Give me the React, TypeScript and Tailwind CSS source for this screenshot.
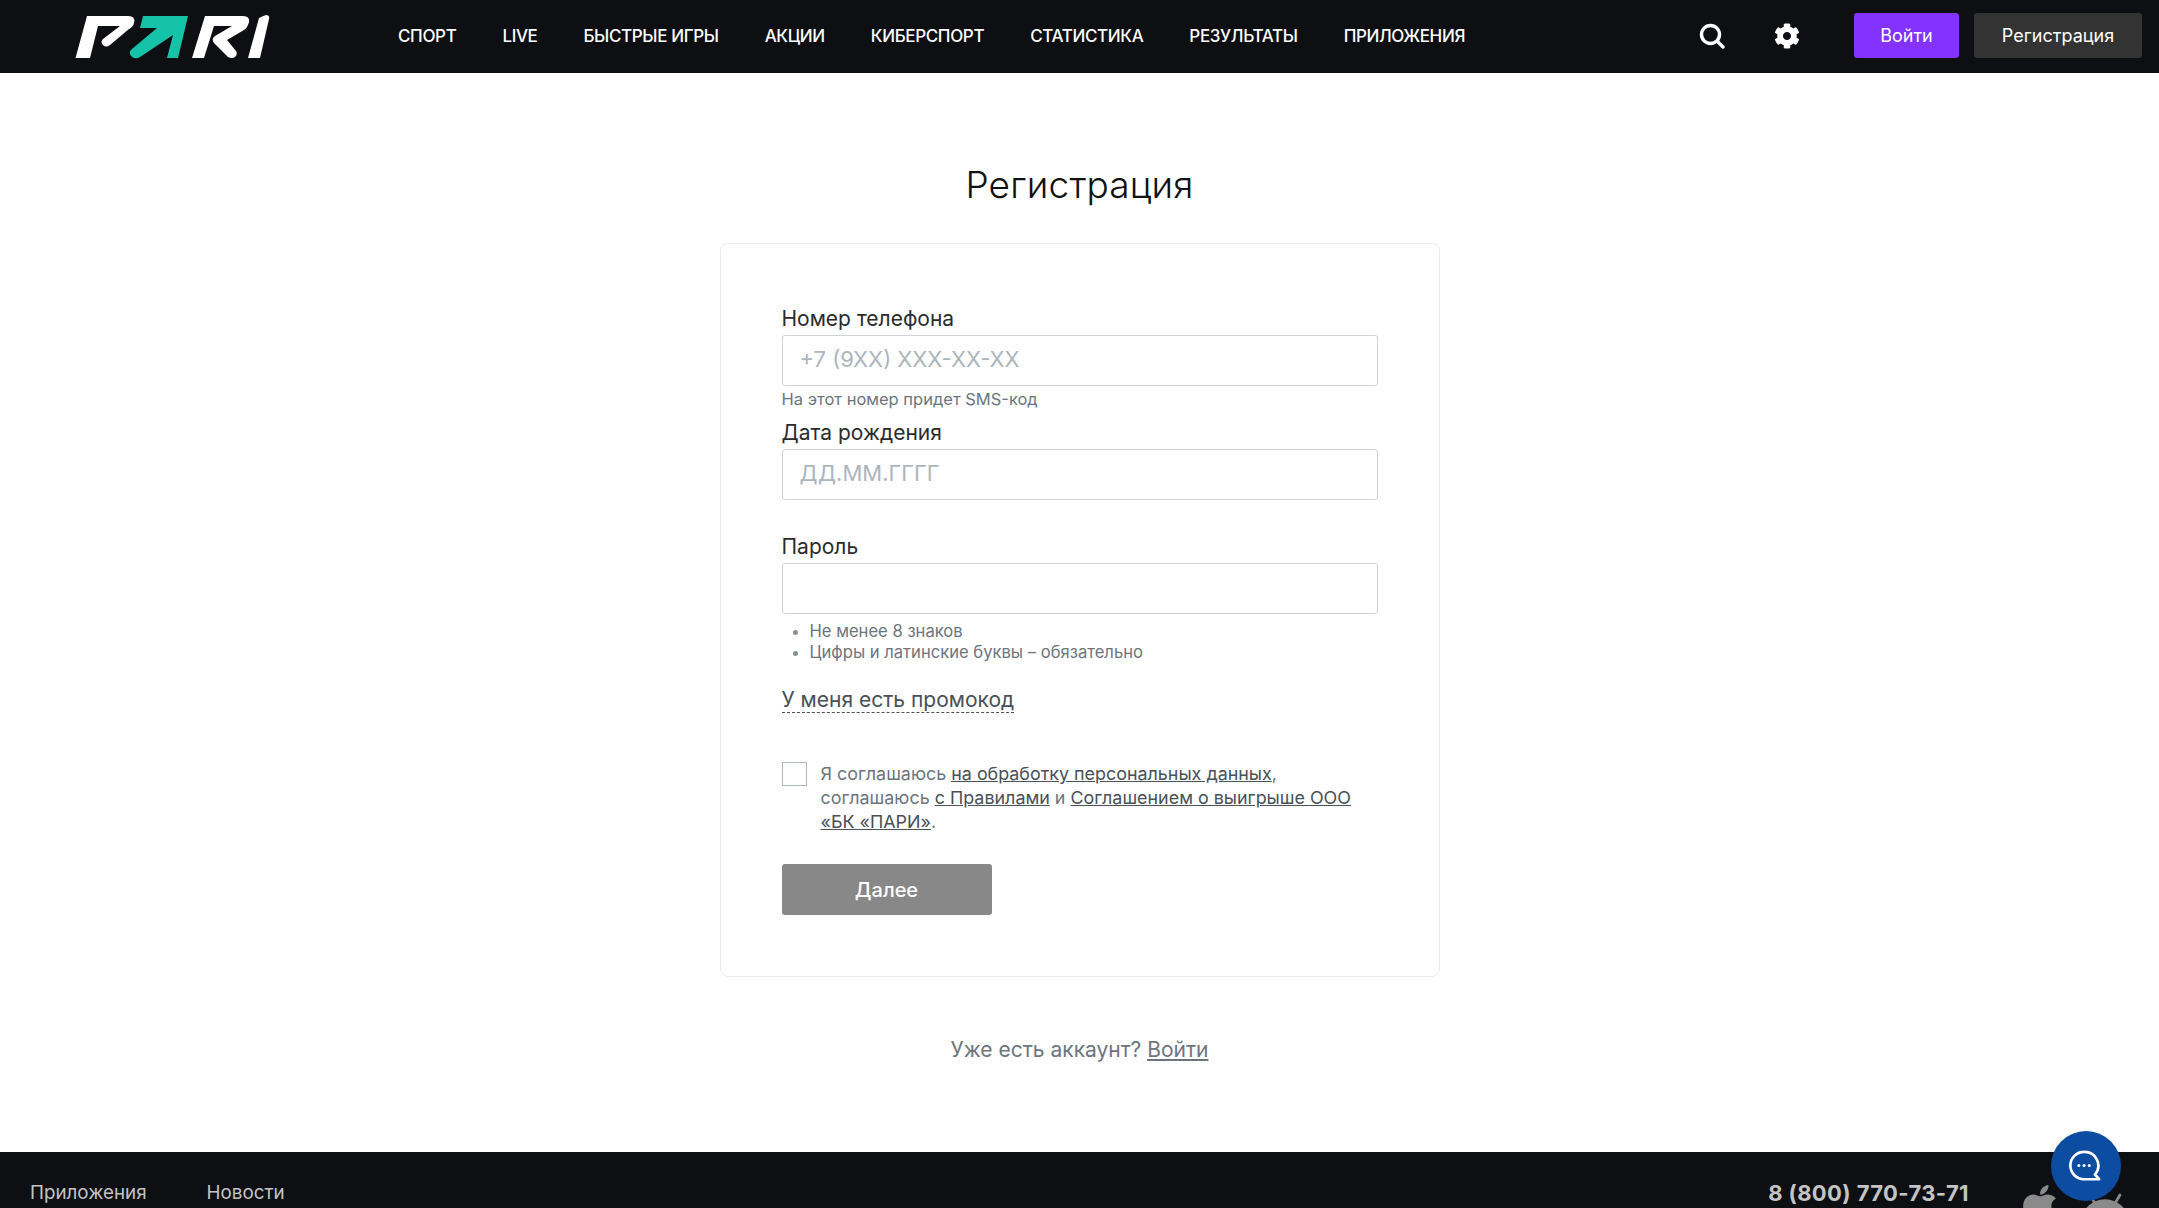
import React from "react";
import { FaApple, FaCog } from "react-icons/fa";
import { MdAndroid } from "react-icons/md";

const nav = ["СПОРТ", "LIVE", "БЫСТРЫЕ ИГРЫ", "АКЦИИ", "КИБЕРСПОРТ", "СТАТИСТИКА", "РЕЗУЛЬТАТЫ", "ПРИЛОЖЕНИЯ"];

function Logo() {
  return (
    <svg width="195" height="44" viewBox="75 14 195 44" className="shrink-0">
      <path d="M87 15H128Q136 15 134 22Q133 26 129 28L110 44Q106 47 103 44Q100 41 103 38L120 25H98L90 57H75.500Z" fill="#fff" />
      <path d="M143 15H188L178 57H167L173 34L140 56Q135 59 131 55Q128 51 132 48L157 27H140Z" fill="#14c3a8" />
      <path d="M205 15H243Q250 15 249 21Q248 26 244 29L227 39L236 50Q238 53 235 56Q232 58 228 56L214 42Q211 38 215 35L232 25H214L204 57H192Z" fill="#fff" />
      <path d="M259 17Q263 15 266 14Q270 14 269 18L260 57H248Z" fill="#fff" />
    </svg>
  );
}

function Field({ label, placeholder, hint }: { label: string; placeholder?: string; hint?: string }) {
  return (
    <div className="mb-[10px]">
      <div className="text-[21px] leading-6 text-[#2b2b2b] mb-[4px]">{label}</div>
      <div className="h-[51px] border border-[#ced4da] rounded-[3px] px-[17px] flex items-center bg-white">
        {placeholder ? <span className="text-[22px] leading-6 text-[#adb5bd] -mt-[3px]">{placeholder}</span> : null}
      </div>
      <div className="mt-[1px] h-6 text-[16.500px] leading-6 text-[#6c757d]">{hint}</div>
    </div>
  );
}

export default function App() {
  return (
    <div className="relative h-screen overflow-hidden bg-white flex flex-col font-['Inter',sans-serif]">
      <header className="h-[73px] shrink-0 bg-[#0e0f13] flex items-center pl-[75px] pr-[17px]">
        <Logo />
        <nav className="ml-[128px] flex items-center gap-[46px] text-[17px] font-medium text-white tracking-[-0.36px] whitespace-nowrap">
          {nav.map((n) => (
            <span key={n}>{n}</span>
          ))}
        </nav>
        <div className="ml-auto flex items-center -mt-[2px]">
          <svg width="26" height="26" viewBox="0 0 26 26" fill="none" stroke="#fff" strokeWidth="3.400" strokeLinecap="round">
            <circle cx="11.500" cy="11.500" r="9" />
            <path d="M18.500 18.500L24 24" />
          </svg>
          <FaCog className="ml-[49px] text-white" size={26} />
          <button className="ml-[54px] w-[105px] h-[45px] rounded-[3px] bg-[#8332ff] text-white text-[18px]">Войти</button>
          <button className="ml-[15px] w-[168px] h-[45px] rounded-[3px] bg-[#333333] text-white text-[18px]">Регистрация</button>
        </div>
      </header>

      <main className="flex-1 flex flex-col items-center">
        <h1 className="mt-[90px] text-[37px] leading-11 font-light text-[#111] tracking-[0.2px]">Регистрация</h1>
        <div className="mt-[36px] w-[720px] h-[734px] border border-[#e9ecef] rounded-[8px] px-[61px] pt-[63px]">
          <Field label="Номер телефона" placeholder="+7 (9XX) XXX-XX-XX" hint="На этот номер придет SMS-код" />
          <Field label="Дата рождения" placeholder="ДД.ММ.ГГГГ" />
          <div>
            <div className="text-[21px] leading-6 text-[#2b2b2b] mb-[4px]">Пароль</div>
            <div className="h-[51px] border border-[#ced4da] rounded-[3px]" />
            <ul className="mt-[7px] pl-[28px] list-disc text-[16.600px] leading-[21px] text-[#6c757d] marker:text-[#868e96]">
              <li>Не менее 8 знаков</li>
              <li>Цифры и латинские буквы – обязательно</li>
            </ul>
          </div>
          <div className="mt-[25px]">
            <span className="inline-block text-[21px] leading-6 text-[#495057] border-b border-dashed border-[#495057]">У меня есть промокод</span>
          </div>
          <div className="mt-[49px] flex items-start">
            <div className="w-[25px] h-[24px] shrink-0 border border-[#adb5bd] bg-white" />
            <p className="ml-[14px] text-[17.900px] leading-6 text-[#6c757d] w-[550px]">
              Я соглашаюсь <a className="underline text-[#495057]">на обработку персональных данных</a>, соглашаюсь{" "}
              <a className="underline text-[#495057]">с Правилами</a> и{" "}
              <a className="underline text-[#495057]">Соглашением о выигрыше ООО «БК «ПАРИ»</a>.
            </p>
          </div>
          <button className="mt-[30px] w-[210px] h-[51px] rounded-[3px] bg-[#888888] text-white text-[20px] font-medium">Далее</button>
        </div>
        <div className="mt-[61px] text-[21px] leading-6 text-[#6c757d]">
          Уже есть аккаунт? <a className="underline">Войти</a>
        </div>
      </main>

      <footer className="absolute left-0 right-0 top-[1152px] h-[120px] bg-[#0e0f13] flex pl-[30px] pr-[28px] pt-[29px] items-start">
        <div className="flex gap-[60px] text-[18.800px] leading-6 text-[#c4c4c4]">
          <span>Приложения</span>
          <span>Новости</span>
        </div>
        <div className="ml-auto flex items-start">
          <span className="text-[22px] leading-6 font-bold tracking-[0.4px] text-[#c4c4c4]">8 (800) 770-73-71</span>
          <FaApple className="ml-[48px] mt-[1px] text-[#8a8a8a]" size={46} />
          <MdAndroid className="ml-[16px] mt-[1px] text-[#8a8a8a]" size={52} />
        </div>
      </footer>

      <div className="absolute left-[2051px] top-[1131px] w-[70px] h-[70px] rounded-full bg-[#0c4da2] flex items-center justify-center">
        <svg width="34" height="34" viewBox="0 0 36 36" fill="none" className="-ml-[2px]">
          <path d="M17 3A14.500 14.500 0 1 0 17 32H33L28.500 27A14.500 14.500 0 0 0 17 3Z" stroke="#fff" strokeWidth="2.800" strokeLinejoin="round" />
          <circle cx="11.500" cy="17.500" r="1.600" fill="#fff" />
          <circle cx="17" cy="17.500" r="1.600" fill="#fff" />
          <circle cx="22.500" cy="17.500" r="1.600" fill="#fff" />
        </svg>
      </div>
    </div>
  );
}
